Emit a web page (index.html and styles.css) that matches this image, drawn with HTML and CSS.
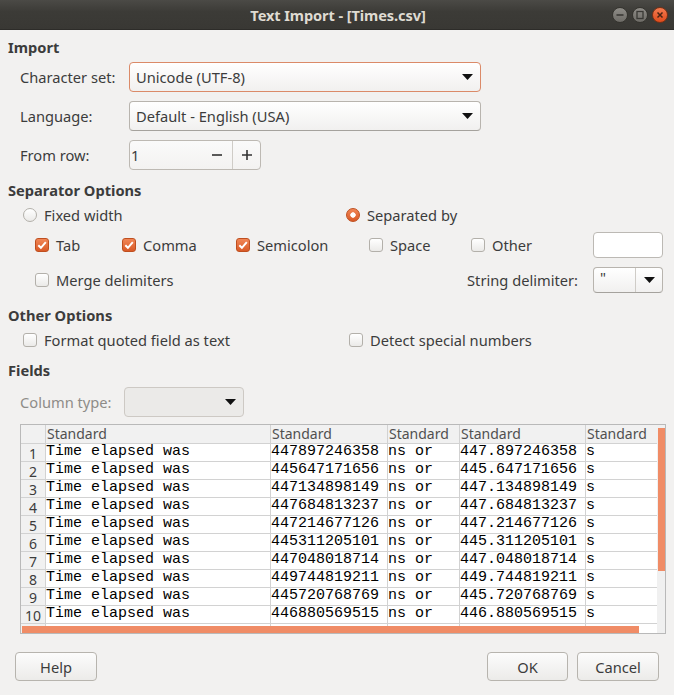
FILE: index.html
```html
<!DOCTYPE html>
<html>
<head>
<meta charset="utf-8">
<title>Text Import - [Times.csv]</title>
<link rel="stylesheet" href="styles.css">
</head>
<body>
<header class="titlebar">
  <span></span>
  <span class="title">Text Import - [Times.csv]</span>
  <div class="win-btns">
    <span class="wbtn"><svg width="16" height="16" viewBox="0 0 16 16"><line x1="4.5" y1="8" x2="11.5" y2="8" stroke="#3a3935" stroke-width="1.6"/></svg></span>
    <span class="wbtn"><svg width="16" height="16" viewBox="0 0 16 16"><rect x="5" y="4.5" width="6" height="7" fill="none" stroke="#3a3935" stroke-width="1.3"/></svg></span>
    <span class="wbtn close"><svg width="16" height="16" viewBox="0 0 16 16"><path d="M5.5 5.5 L10.5 10.5 M10.5 5.5 L5.5 10.5" stroke="#4a2413" stroke-width="1.5"/></svg></span>
  </div>
</header>

<main class="body">
  <h2 class="section s-import">Import</h2>
  <div class="form-row r-charset">
    <span class="flabel">Character set:</span>
    <div class="combo focused"><span class="ctext">Unicode (UTF-8)</span><svg class="arrow" width="11" height="6" viewBox="0 0 11 6"><polygon points="0,0 11,0 5.5,6" fill="#111"/></svg></div>
  </div>
  <div class="form-row r-lang">
    <span class="flabel">Language:</span>
    <div class="combo"><span class="ctext">Default - English (USA)</span><svg class="arrow" width="11" height="6" viewBox="0 0 11 6"><polygon points="0,0 11,0 5.5,6" fill="#111"/></svg></div>
  </div>
  <div class="form-row r-from">
    <span class="flabel">From row:</span>
    <div class="spin">
      <span class="spin-entry">1</span>
      <span class="spin-btn"><svg width="12" height="12" viewBox="0 0 12 12"><line x1="1" y1="6" x2="11" y2="6" stroke="#333" stroke-width="1.6"/></svg></span>
      <span class="spin-btn plus"><svg width="12" height="12" viewBox="0 0 12 12"><path d="M1 6 H11 M6 1 V11" stroke="#333" stroke-width="1.6"/></svg></span>
    </div>
  </div>

  <h2 class="section s-sep">Separator Options</h2>
  <div class="opt-row r-radio">
    <label class="opt w-fixed"><span class="radio"></span>Fixed width</label>
    <label class="opt"><span class="radio on"></span>Separated by</label>
  </div>
  <div class="opt-row r-checks">
    <label class="opt w-tab"><span class="check on"><svg width="14" height="14" viewBox="0 0 14 14"><path d="M3.3 7.2 L5.9 9.8 L10.8 4.2" fill="none" stroke="#fff" stroke-width="2"/></svg></span>Tab</label>
    <label class="opt w-comma"><span class="check on"><svg width="14" height="14" viewBox="0 0 14 14"><path d="M3.3 7.2 L5.9 9.8 L10.8 4.2" fill="none" stroke="#fff" stroke-width="2"/></svg></span>Comma</label>
    <label class="opt w-semi"><span class="check on"><svg width="14" height="14" viewBox="0 0 14 14"><path d="M3.3 7.2 L5.9 9.8 L10.8 4.2" fill="none" stroke="#fff" stroke-width="2"/></svg></span>Semicolon</label>
    <label class="opt w-space"><span class="check"></span>Space</label>
    <label class="opt w-other"><span class="check"></span>Other</label>
    <span class="entry small"></span>
  </div>
  <div class="opt-row r-merge">
    <label class="opt grow"><span class="check"></span>Merge delimiters</label>
    <span class="strlabel">String delimiter:</span>
    <div class="combo small split"><span class="ctext">"</span><span class="split-btn"><svg width="11" height="6" viewBox="0 0 11 6"><polygon points="0,0 11,0 5.5,6" fill="#111"/></svg></span></div>
  </div>

  <h2 class="section s-other">Other Options</h2>
  <div class="opt-row r-other">
    <label class="opt w-quoted"><span class="check"></span>Format quoted field as text</label>
    <label class="opt"><span class="check"></span>Detect special numbers</label>
  </div>

  <h2 class="section s-fields">Fields</h2>
  <div class="form-row r-coltype">
    <span class="flabel disabled">Column type:</span>
    <div class="combo disabled"><span class="ctext"></span><svg class="arrow" width="11" height="6" viewBox="0 0 11 6"><polygon points="0,0 11,0 5.5,6" fill="#111"/></svg></div>
  </div>

  <div class="table-wrap">
    <div class="grid">
      <div class="hc num"></div><div class="hc">Standard</div><div class="hc">Standard</div><div class="hc">Standard</div><div class="hc">Standard</div><div class="hc last">Standard</div>

      <div class="rn">1</div><div class="dc">Time elapsed was</div><div class="dc">447897246358</div><div class="dc">ns or</div><div class="dc">447.897246358</div><div class="dc last">s</div>
      <div class="rn">2</div><div class="dc">Time elapsed was</div><div class="dc">445647171656</div><div class="dc">ns or</div><div class="dc">445.647171656</div><div class="dc last">s</div>
      <div class="rn">3</div><div class="dc">Time elapsed was</div><div class="dc">447134898149</div><div class="dc">ns or</div><div class="dc">447.134898149</div><div class="dc last">s</div>
      <div class="rn">4</div><div class="dc">Time elapsed was</div><div class="dc">447684813237</div><div class="dc">ns or</div><div class="dc">447.684813237</div><div class="dc last">s</div>
      <div class="rn">5</div><div class="dc">Time elapsed was</div><div class="dc">447214677126</div><div class="dc">ns or</div><div class="dc">447.214677126</div><div class="dc last">s</div>
      <div class="rn">6</div><div class="dc">Time elapsed was</div><div class="dc">445311205101</div><div class="dc">ns or</div><div class="dc">445.311205101</div><div class="dc last">s</div>
      <div class="rn">7</div><div class="dc">Time elapsed was</div><div class="dc">447048018714</div><div class="dc">ns or</div><div class="dc">447.048018714</div><div class="dc last">s</div>
      <div class="rn">8</div><div class="dc">Time elapsed was</div><div class="dc">449744819211</div><div class="dc">ns or</div><div class="dc">449.744819211</div><div class="dc last">s</div>
      <div class="rn">9</div><div class="dc">Time elapsed was</div><div class="dc">445720768769</div><div class="dc">ns or</div><div class="dc">445.720768769</div><div class="dc last">s</div>
      <div class="rn">10</div><div class="dc">Time elapsed was</div><div class="dc">446880569515</div><div class="dc">ns or</div><div class="dc">446.880569515</div><div class="dc last">s</div>
      <div class="rn"></div><div class="dc"></div><div class="dc"></div><div class="dc"></div><div class="dc"></div><div class="dc last"></div>
    </div>
    <div class="trough"></div>
    <div class="vscroll"></div>
    <div class="hscroll"></div>
  </div>

  <div class="buttons">
    <button class="btn">Help</button>
    <div class="btn-group">
      <button class="btn">OK</button>
      <button class="btn">Cancel</button>
    </div>
  </div>
</main>
</body>
</html>
```
FILE: styles.css
```css
* { box-sizing: border-box; }

html, body {
  margin: 0;
  padding: 0;
}

body {
  width: 674px;
  height: 695px;
  overflow: hidden;
  background: #f2f1f0;
  font-family: "Noto Sans", "DejaVu Sans", sans-serif;
  font-size: 14.67px;
  color: #3c3c3c;
}

/* ---------- title bar ---------- */
.titlebar {
  height: 30px;
  display: grid;
  grid-template-columns: 1fr auto 1fr;
  align-items: center;
  background: linear-gradient(#4b4a46, #3c3b37 40%, #393834);
  border-bottom: 1px solid #2d2c29;
}
.title {
  color: #dfdbd2;
  font-weight: bold;
  font-size: 14.6px;
  letter-spacing: -0.1px;
  padding-left: 2px;
}
.win-btns {
  justify-self: end;
  display: flex;
  gap: 4px;
  padding-right: 6px;
}
.wbtn {
  width: 16px;
  height: 16px;
  border-radius: 50%;
  background: linear-gradient(#8e8c87, #6d6b66);
  border: 1px solid #35342f;
  display: flex;
  align-items: center;
  justify-content: center;
}
.wbtn svg { display: block; margin: -1px; }
.wbtn.close {
  background: linear-gradient(#f47b50, #df4b1c);
  border-color: #7a3115;
}

/* ---------- body ---------- */
.body {
  padding: 0 8px;
}

.section {
  margin: 0;
  font-size: 14.67px;
  font-weight: bold;
  line-height: 20px;
  height: 20px;
  color: #3c3c3c;
}
.s-import { margin-top: 7px; }
.s-sep { margin-top: 10px; }
.s-other { margin-top: 12px; }
.s-fields { margin-top: 10px; }

.form-row {
  display: flex;
  align-items: center;
  height: 30px;
  padding-left: 12px;
}
.r-charset { margin-top: 5px; }
.r-lang { margin-top: 9px; }
.r-from { margin-top: 9px; }
.r-coltype { margin-top: 7px; }

.flabel {
  width: 109px;
  flex: none;
}
.r-coltype .flabel { width: 104px; }
.flabel.disabled { color: #8e8c88; }

.combo {
  width: 352px;
  height: 30px;
  display: flex;
  align-items: center;
  justify-content: space-between;
  padding: 0 7px 0 6px;
  border: 1px solid #b8b4ae;
  border-bottom-color: #a5a29d;
  border-radius: 4px;
  background: linear-gradient(#ffffff, #f1f0ef);
}
.combo.focused {
  border-color: #db8a68;
}
.combo.disabled {
  width: 120px;
  background: #ebeae8;
  border-color: #cdc9c4;
}
.ctext { white-space: nowrap; }

.spin {
  width: 132px;
  height: 30px;
  display: flex;
  align-items: stretch;
  border: 1px solid #bdb9b3;
  border-radius: 4px;
  background: linear-gradient(#fafafa, #f3f2f1);
}
.spin-entry {
  flex: 1;
  display: flex;
  align-items: center;
  padding-left: 1px;
}
.spin-btn {
  width: 30px;
  display: flex;
  align-items: center;
  justify-content: center;
}
.spin-btn.plus {
  width: 28px;
  border-left: 1px solid #cfccc7;
}

/* ---------- option rows ---------- */
.opt-row {
  display: flex;
  align-items: center;
}
.r-radio { height: 20px; margin-top: 5px; padding-left: 15px; }
.r-checks { height: 26px; margin-top: 7px; padding-left: 27px; }
.r-merge { height: 26px; margin-top: 9px; padding-left: 27px; padding-right: 3px; }
.r-other { height: 20px; margin-top: 5px; padding-left: 15px; }

.opt {
  display: flex;
  align-items: center;
  gap: 7px;
  white-space: nowrap;
  flex: none;
}
.opt.grow { flex: 1; }
.w-fixed { width: 323px; }
.w-tab { width: 87px; }
.w-comma { width: 114px; }
.w-semi { width: 133px; }
.w-space { width: 102px; }
.w-other { width: 122px; }
.w-quoted { width: 326px; }

.check, .radio {
  width: 14px;
  height: 14px;
  flex: none;
  border: 1px solid #b3b0aa;
  background: linear-gradient(#ffffff, #ebeae8);
  display: flex;
  align-items: center;
  justify-content: center;
}
.check { border-radius: 3px; }
.check svg { margin: -1px; display: block; }
.check.on {
  border-color: #bf4f1f;
  background: linear-gradient(#f18656, #d95a27);
}
.radio { border-radius: 50%; }
.radio.on {
  border-color: #bf4f1f;
  background: radial-gradient(circle, #ffffff 0 2.4px, transparent 3px), linear-gradient(#f18656, #d95a27);
}

.entry.small {
  width: 70px;
  height: 26px;
  border: 1px solid #bcb9b4;
  border-radius: 4px;
  background: #fff;
}

.strlabel {
  margin-right: 15px;
}
.combo.small {
  width: 70px;
  height: 26px;
  padding: 0 0 0 6px;
}
.split-btn {
  width: 27px;
  height: 100%;
  border-left: 1px solid #cfccc7;
  display: flex;
  align-items: center;
  justify-content: center;
}
.combo.small .ctext { line-height: 1; margin-top: -6px; }

/* ---------- table ---------- */
.table-wrap {
  position: relative;
  margin: 7px 0 0 12px;
  width: 646px;
  height: 210px;
  border: 1px solid #b9b9b9;
  background: #f2f2f2;
  display: flex;
  overflow: hidden;
}
.grid {
  display: grid;
  grid-template-columns: 25px 225px 117px 72px 126px 71px;
  grid-auto-rows: 18px;
  grid-template-rows: 19px;
  width: 636px;
  align-content: start;
  background: #fff;
}
.hc, .rn, .dc {
  border-right: 1px solid #d2d2d2;
  border-bottom: 1px solid #d2d2d2;
  white-space: nowrap;
  overflow: hidden;
}
.last { border-right: none; }
.hc {
  background: #f1f1f1;
  font-size: 14px;
  line-height: 18px;
  color: #505050;
  padding-left: 1px;
}
.rn {
  background: #f1f1f1;
  text-align: center;
  font-size: 14px;
  line-height: 19px;
  color: #3c3c3c;
}
.dc {
  font-family: "Liberation Mono", "DejaVu Sans Mono", monospace;
  font-size: 15px;
  line-height: 16px;
  color: #000;
}
.trough {
  flex: 1;
  background: #f0f0f0;
}
.vscroll {
  position: absolute;
  left: 637px;
  top: 3px;
  width: 7px;
  height: 143px;
  background: #f08c66;
}
.hscroll {
  position: absolute;
  left: 1px;
  bottom: 0px;
  width: 617px;
  height: 7px;
  background: #f08c66;
}

/* ---------- buttons ---------- */
.buttons {
  display: flex;
  justify-content: space-between;
  margin: 18px 0 0 7px;
  width: 644px;
}
.btn-group {
  display: flex;
  gap: 9px;
}
.btn {
  width: 82px;
  height: 29px;
  border: 1px solid #b7b4ae;
  border-radius: 4px;
  background: linear-gradient(#fcfcfc, #ecebe9);
  font-family: inherit;
  font-size: 14.67px;
  color: #3c3c3c;
  padding: 0;
}
.btn-group .btn:first-child { width: 81px; }
```
